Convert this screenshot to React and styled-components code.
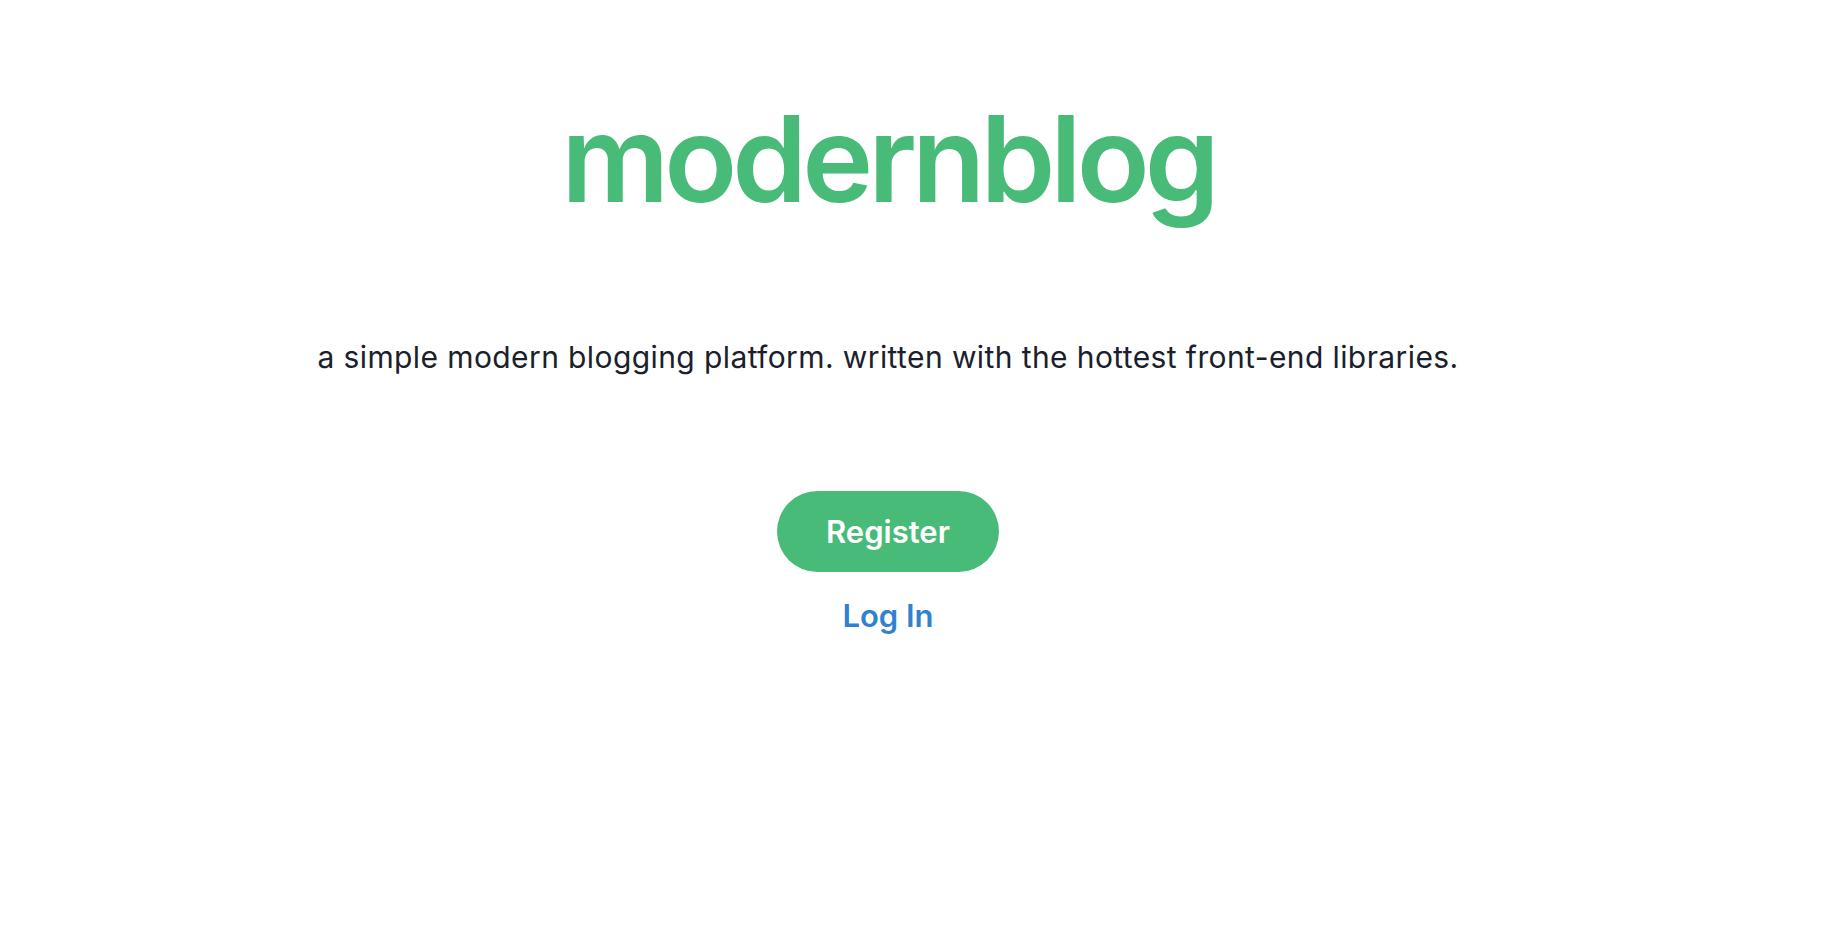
import React from 'react'
import styled, { createGlobalStyle } from 'styled-components';

const GlobalStyle = createGlobalStyle`
    html, body {
        margin: 0;
        padding: 0;
        background: #ffffff;
        font-family: Inter, "Liberation Sans", sans-serif;
    }
`;

const Landing = styled.main`
    min-height: 100vh;
    display: flex;
    flex-direction: column;
    align-items: center;
    padding: 91px 56px 0 0;
    box-sizing: border-box;
`;

const Title = styled.h1`
    margin: 0;
    font-size: 120px;
    line-height: 136px;
    font-weight: 600;
    letter-spacing: -5px;
    color: #48bb78;
`;

const Tagline = styled.p`
    margin: 110px 0 0;
    font-size: 30px;
    line-height: 40px;
    letter-spacing: 0.4px;
    color: #1a202c;
`;

const Actions = styled.div`
    margin-top: 114px;
    display: flex;
    flex-direction: column;
    align-items: center;
    gap: 25px;
`;

const RegisterButton = styled.button`
    border: none;
    cursor: pointer;
    background: #48bb78;
    color: #ffffff;
    font-family: inherit;
    font-size: 31px;
    font-weight: 600;
    line-height: 37px;
    padding: 22px 49px;
    border-radius: 999px;
`;

const LoginLink = styled.a`
    color: #3182ce;
    font-size: 31px;
    font-weight: 600;
    line-height: 37px;
    text-decoration: none;
    cursor: pointer;
`;

const App = () => {
    return (
        <>
            <GlobalStyle />
            <Landing>
                <Title>modernblog</Title>
                <Tagline>a simple modern blogging platform. written with the hottest front-end libraries.</Tagline>
                <Actions>
                    <RegisterButton>Register</RegisterButton>
                    <LoginLink href="#">Log In</LoginLink>
                </Actions>
            </Landing>
        </>
    );
}

export default App;
